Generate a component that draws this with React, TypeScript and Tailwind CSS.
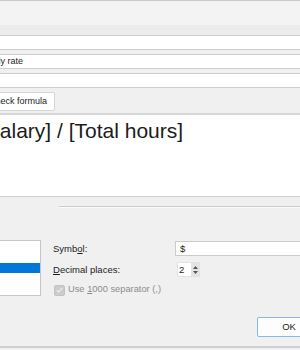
export default function App() {
  return (
    <div className="w-[300px] h-[350px] overflow-hidden bg-[#f0f0f0] text-[#1c1c1c] flex flex-col font-['Liberation_Sans',Arial,sans-serif]">
      {/* header strip */}
      <div className="h-px bg-[#c8c8c8]" />
      <div className="h-[24px] bg-[#f3f3f3]" />
      <div className="h-[10px] bg-[#ececec]" />

      {/* fields */}
      <div className="h-[15px] border-y border-[#cdcdcd] bg-white" />
      <div className="h-[4px]" />
      <div className="h-[15px] border-y border-[#cdcdcd] bg-white flex items-center overflow-hidden">
        <span className="ml-[-21px] text-[9px] leading-none whitespace-nowrap">Hourly rate</span>
      </div>
      <div className="h-[4px]" />
      <div className="h-[15px] border-y border-[#cdcdcd] bg-white" />

      <div className="h-[25px] pt-[4px] flex">
        <button className="-ml-[20px] h-[19px] w-[75px] shrink-0 bg-white border border-[#d6d6d6] rounded-[2px] pl-[8px] text-left text-[9px] leading-none whitespace-nowrap">
          Check formula
        </button>
      </div>

      {/* formula */}
      <div className="h-[2px] bg-[#d6d6d6]" />
      <div className="h-[81px] bg-white pt-[5px] overflow-hidden">
        <div className="ml-[-20px] text-[21px] leading-none whitespace-nowrap">[Salary] / [Total hours]</div>
      </div>
      <div className="h-px bg-[#cfcfcf]" />

      {/* format group */}
      <div className="h-[9px]" />
      <div className="flex">
        <div className="w-[59px] shrink-0" />
        <div className="flex-1">
          <div className="h-px bg-[#cdcdcd]" />
          <div className="h-px bg-[#fafafa]" />
        </div>
      </div>
      <div className="h-[32px]" />

      <div className="flex">
        <div className="-ml-[20px] w-[61px] h-[56px] shrink-0 border border-[#c6c6c6] bg-white flex flex-col">
          <div className="h-[22px]" />
          <div className="h-[10px] bg-[#0078d7]" />
        </div>

        <div className="ml-[12px] pt-[1px] shrink-0 flex flex-col text-[9.5px] leading-none">
          <div className="flex items-center h-[15px]">
            <span className="w-[122px] shrink-0 whitespace-nowrap">
              Symb<span className="underline">o</span>l:
            </span>
            <div className="w-[200px] h-[15px] shrink-0 border border-[#cbcbcb] bg-white flex items-center pl-[4px]">$</div>
          </div>
          <div className="flex items-center h-[15px] mt-[6px]">
            <span className="w-[122px] shrink-0 whitespace-nowrap">
              <span className="underline">D</span>ecimal places:
            </span>
            <div className="ml-[2px] h-[15px] flex border border-[#e2e2e2] bg-white">
              <div className="w-[13px] flex items-center pl-[1px]">2</div>
              <div className="w-[8px] bg-[#e4e4e4] flex flex-col items-center justify-center gap-[2px]">
                <svg width="5" height="3" viewBox="0 0 5 3">
                  <path d="M0 3 L2.5 0 L5 3 Z" fill="#555" />
                </svg>
                <svg width="5" height="3" viewBox="0 0 5 3">
                  <path d="M0 0 L2.5 3 L5 0 Z" fill="#555" />
                </svg>
              </div>
            </div>
          </div>
          <div className="flex items-center h-[12px] mt-[7px] text-[#8c8c8c]">
            <div className="ml-[1px] w-[11px] h-[11px] shrink-0 rounded-[2px] bg-[#cccccc] border border-[#c2c2c2] flex items-center justify-center">
              <svg width="7" height="6" viewBox="0 0 7 6">
                <path d="M0.8 3.2 L2.7 5 L6.2 1" stroke="#ececec" strokeWidth="1.2" fill="none" />
              </svg>
            </div>
            <span className="ml-[3px] text-[9.3px] whitespace-nowrap">
              Use <span className="underline">1</span>000 separator (,)
            </span>
          </div>
        </div>
      </div>

      <div className="h-[21px]" />
      <div className="flex">
        <button className="ml-[257px] w-[64px] h-[20px] shrink-0 bg-[#fdfdfd] border border-[#86b9ea] rounded-[2px] text-[9.5px] leading-none">
          OK
        </button>
      </div>
      <div className="h-[9px]" />
      <div className="h-[2px] bg-[#cfcfcf]" />
    </div>
  );
}
